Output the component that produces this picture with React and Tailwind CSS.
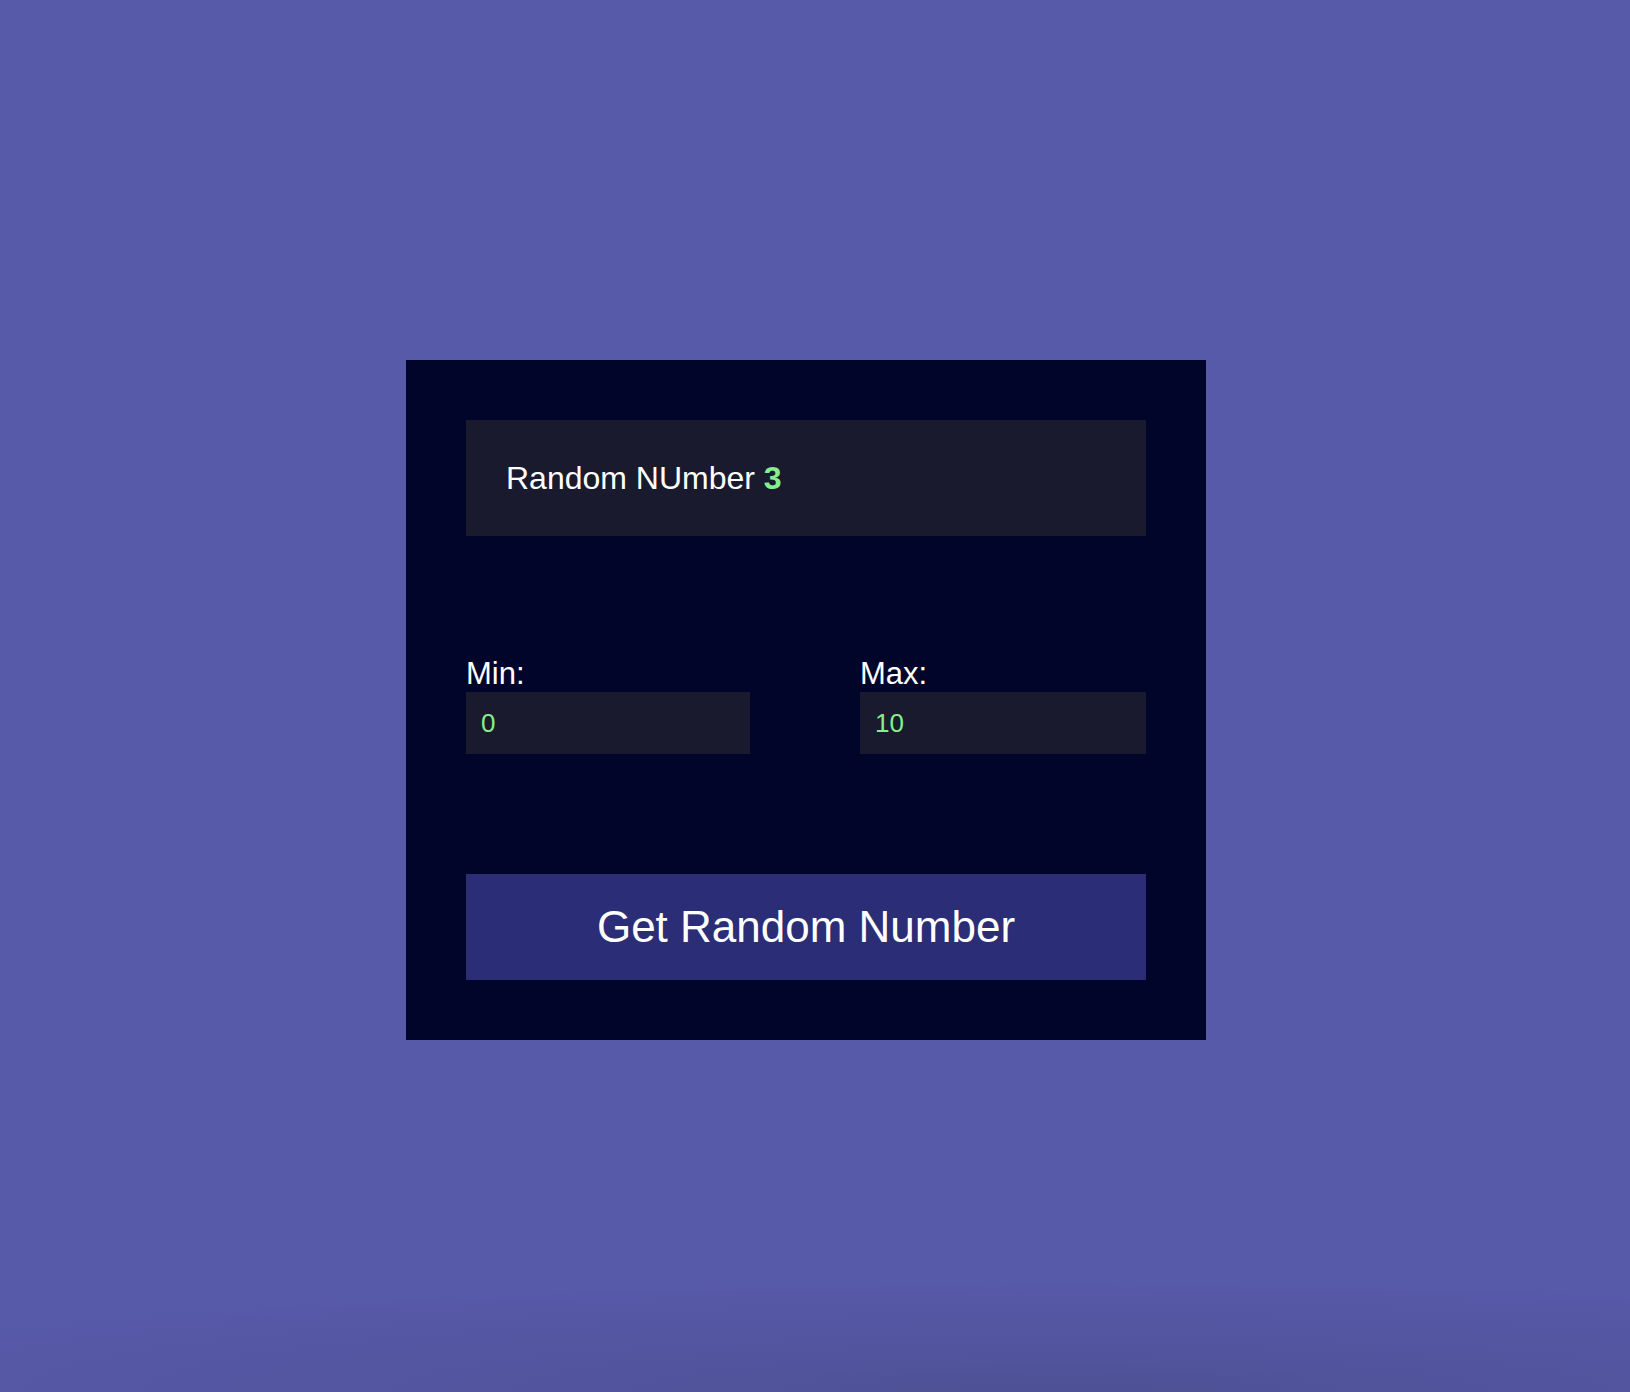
// RandomNumber: picks a number between a min and a max

import { useState } from 'react';

const FONT = { fontFamily: '"Liberation Sans", Arial, sans-serif' };

function Field({ label, value, onChange, width }) {
  return (
    <label className={`flex flex-col ${width}`}>
      <span className="text-white text-[31px] leading-[36px]">{label}</span>
      <input
        type="text"
        value={value}
        onChange={(e) => onChange(e.target.value)}
        className="h-[62px] bg-[#1a1a2f] text-[#86ee8c] text-[26px] pl-[15px] outline-none border-0"
        style={FONT}
      />
    </label>
  );
}

export default function App() {
  const [min, setMin] = useState('0');
  const [max, setMax] = useState('10');
  const [result, setResult] = useState(3);

  const roll = () => {
    const lo = parseInt(min, 10) || 0;
    const hi = parseInt(max, 10) || 0;
    setResult(Math.floor(Math.random() * (hi - lo + 1)) + lo);
  };

  return (
    <div
      className="min-h-screen flex items-start justify-center pt-[360px] pr-[18px] bg-[#5759a9] bg-[radial-gradient(ellipse_1300px_110px_at_65%_100%,#4f5196_0%,rgba(87,89,169,0)_100%)]"
      style={FONT}
    >
      <div className="w-[800px] bg-[#01052a] p-[60px] flex flex-col">
        {/* Result */}
        <div className="h-[116px] bg-[#1a1a2f] flex items-center pl-[40px]">
          <p className="text-white text-[32px]">
            Random NUmber <span className="font-bold text-[#86ee8c]">{result}</span>
          </p>
        </div>

        {/* Range */}
        <div className="flex justify-between mt-[120px]">
          <Field label="Min:" value={min} onChange={setMin} width="w-[284px]" />
          <Field label="Max:" value={max} onChange={setMax} width="w-[286px]" />
        </div>

        {/* Action */}
        <button
          onClick={roll}
          className="mt-[120px] h-[106px] bg-[#2b2d77] text-white text-[44px] cursor-pointer"
        >
          Get Random Number
        </button>
      </div>
    </div>
  );
}
